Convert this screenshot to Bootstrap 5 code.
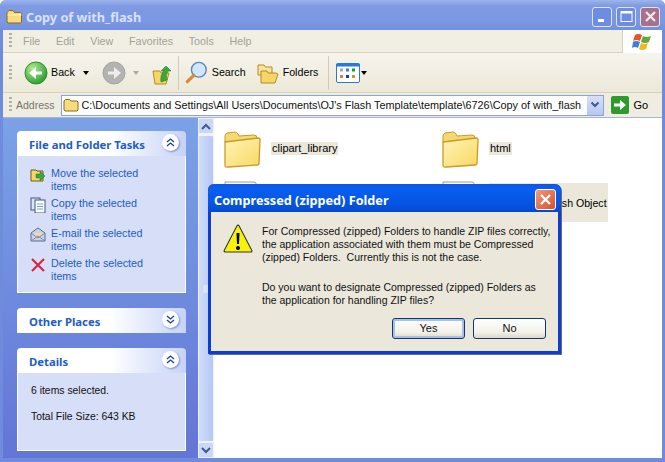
<!DOCTYPE html>
<html lang="en">
<head>
<meta charset="utf-8">
<title>Copy of with_flash</title>
<link href="https://cdn.jsdelivr.net/npm/bootstrap@5.3.0/dist/css/bootstrap.min.css" rel="stylesheet">
<style>
html,body{margin:0;height:462px;overflow:hidden;background:#fff}
body{font-family:"Liberation Sans",sans-serif;font-size:11px;line-height:13px;color:#000}
.xp-win{position:relative;width:665px;height:462px;display:flex;flex-direction:column;background:#6f8bdc;padding:0 3px 4px 3px;border-radius:6px 6px 0 0;overflow:hidden}
.xp-title{height:30px;margin:0 -3px;padding:3px 3px 0 6px;flex:none;background:linear-gradient(180deg,#9db5ee 0,#7f9ae2 6px,#7c97e3 22px,#7290de 30px);display:flex;align-items:center;gap:3px}
.xp-title-text{font:700 12.7px/16px "Noto Sans",sans-serif;color:#d8e1f7;flex:1}
.xp-cap{width:20px;height:20px;border-radius:3px;border:1px solid #dfe6f8;background:#6c8de3;display:flex;align-items:center;justify-content:center;margin-left:1px}
.xp-cap.xp-closer{background:#a9708c;margin-right:2px}
.xp-menu{height:23px;flex:none;background:#f1efe4;border-bottom:1px solid #d8d2bd;display:flex;align-items:center;color:#a3a196;padding-left:6px;font-size:10.7px}
.xp-grip{width:3px;height:16px;flex:none;background:repeating-linear-gradient(180deg,#b5b1a0 0 2px,transparent 2px 4px)}
.xp-menu .xp-grip{margin-right:11px}
.xp-menu span{margin-right:15.8px}
.xp-flag{margin-left:auto;width:40px;height:23px;background:#fff;display:flex;align-items:center;justify-content:center;border-left:1px solid #d8d2bd}
.xp-tools{height:40px;flex:none;background:linear-gradient(180deg,#f6f4ec,#ece9d9);border-bottom:1px solid #d8d2bd;display:flex;align-items:center;padding-left:6px;font-size:10.7px}
.xp-sep{width:1px;height:34px;background:#cfcbb8}
.xp-dd{width:0;height:0;border:3px solid transparent;border-top:4px solid #000;border-bottom:0}
.xp-dd.xp-dim{opacity:.3}
.xp-addr{height:25px;flex:none;background:#efede1;display:flex;align-items:center;padding:0 3px 0 6px;border-bottom:1px solid #a9b4d2}
.xp-addr-lbl{color:#77756a;margin-left:4px;font-size:10.5px}
.xp-addrbox{width:543px;height:21px;background:#fff;border:1px solid #8fa3d0;display:flex;align-items:center;padding-left:1px;margin-left:6px;overflow:hidden;white-space:nowrap;gap:3px;color:#111;flex:none;font-size:10.83px}
.xp-combo{margin-left:auto;width:16px;height:19px;flex:none;background:linear-gradient(180deg,#d6e0f8,#b6c8f2);display:flex;align-items:center;justify-content:center}
.xp-body{flex:1;display:flex;min-height:0}
.xp-side{width:195px;flex:none;background:linear-gradient(180deg,#7ba2e7,#6375d6);padding:13px 12px 0 14px;display:flex;flex-direction:column;font-size:10.75px}
.xp-box{margin-bottom:15px}
.xp-box-head{height:25px;border-radius:4px 4px 0 0;background:linear-gradient(90deg,#fff 55%,#c6d3f7);display:flex;align-items:center;justify-content:space-between;padding:2px 7px 0 12px;font:700 11.3px/14px "Noto Sans",sans-serif;color:#215dc6}
.xp-box-body{background:#d6dff7;border:1px solid #fff;border-top:0}
.xp-tasks{padding:11px 0 5px}
.xp-details{height:78px;padding:11px 0 0 13px;color:#111;font-size:10.4px}
.xp-details-gap{margin-top:13px}
.xp-chev{width:17px;height:17px;border-radius:50%;background:#fff;box-shadow:1px 1px 2px #7b8fc8;display:flex;align-items:center;justify-content:center;margin-top:-4px}
.xp-task{display:flex;gap:5px;height:30px;padding-left:12px;color:#215dc6}
.xp-task svg{flex:none}
.xp-scroll{width:16px;flex:none;background:#f1f4fd;display:flex;flex-direction:column}
.xp-sbtn{height:16px;flex:none;background:#c9d7f8;border:1px solid #eef2fd;border-radius:2px;display:flex;align-items:center;justify-content:center}
.xp-thumb{flex:1;margin:1px 0 0;background:linear-gradient(90deg,#d0dcfa,#b6c9f6);border:1px solid #eef2fd;border-radius:2px;display:flex;align-items:center;justify-content:center}
.xp-files{flex:1;background:#fff;padding:13px 0 0 10px;display:grid;grid-template-columns:218px 218px;grid-auto-rows:50px;overflow:hidden}
.xp-file{display:flex;gap:8px;align-items:flex-start}
.xp-file svg{flex:none}
.xp-file-label{background:#ebe8db;padding:0 1px;margin-top:11px;white-space:nowrap}
.xp-file-label.xp-multi{margin-top:2px;height:39px;padding-top:1px;font-size:10.6px}
.xp-dialog{position:absolute;left:208px;top:184px;width:353px;height:170px;background:#ebe8db;border:3px solid #0a3ed4;border-top:0;border-radius:6px 6px 0 0;box-shadow:1px 1px 0 #6a6a6a;display:flex;flex-direction:column}
.xp-dlg-title{height:28px;margin:0 -3px;flex:none;background:linear-gradient(180deg,#0a55e4 0,#0a5ff0 4px,#0554e2 20px,#0548d0 28px);border-radius:6px 6px 0 0;display:flex;align-items:center;justify-content:space-between;padding:3px 5px 0 6px;color:#fff;font:700 12.7px/16px "Noto Sans",sans-serif}
.xp-dlg-x{width:21px;height:21px;border-radius:3px;border:1px solid #fff;background:linear-gradient(135deg,#ee9a80,#d8502b);display:flex;align-items:center;justify-content:center}
.xp-dlg-main{display:flex;padding:13px 0 0 11px;gap:7px;flex:1}
.xp-dlg-main svg{flex:none;margin-top:-2px}
.xp-dlg-text{color:#111;width:300px;font-size:10.5px}
.xp-dlg-text p{margin:0 0 17px;white-space:nowrap}
.xp-dlg-text p:last-child{margin:0}
.xp-dlg-btns{display:flex;justify-content:flex-end;gap:8px;padding:0 12px 12px 0}
.xp-btn{width:73px;height:21px;padding:0;border:1px solid #0d3a76;border-radius:3px;background:linear-gradient(180deg,#fff,#f2f1e8 70%,#dcd8c8);font-size:11px;line-height:17px;color:#111}
.xp-btn.xp-dflt{box-shadow:inset 0 0 0 2px #a9c0e8}
.t-back{margin-left:12px}.t-backl{margin:0 8px 0 3px}.t-fwd{margin-left:13px}.t-dd2{margin:0 13px 0 7px}.t-sep1{margin:0 6px}.t-srch{margin:0 11px 0 3px}.t-fl{margin-left:2px}.t-sep2{margin:0 7px 0 10px}
.t-dd3{margin-left:1px}.t-go{margin-left:7px}.t-gol{margin-left:5px}
</style>
</head>
<body>
<div class="xp-win">
  <div class="xp-title">
    <svg width="17" height="15" viewBox="0 0 17 15"><path d="M1 3.500 3 1.500h4l1.500 2h6l1 1V13l-1 1H2l-1-1z" fill="#f7dc7e" stroke="#8c6a10"/><path d="M1.500 6h14" stroke="#fff6c8"/></svg>
    <div class="xp-title-text">Copy of with_flash</div>
    <div class="xp-cap"><svg width="12" height="12"><rect x="2" y="8" width="6" height="3" fill="#fff"/></svg></div>
    <div class="xp-cap"><svg width="13" height="13"><rect x="1" y="1.500" width="11" height="10" fill="none" stroke="#fff"/><rect x="1" y="1" width="11" height="2.500" fill="#fff"/></svg></div>
    <div class="xp-cap xp-closer"><svg width="13" height="13"><path d="M2 2l9 9M11 2l-9 9" stroke="#f3e6ea" stroke-width="2.400"/></svg></div>
  </div>
  <div class="xp-menu">
    <div class="xp-grip"></div>
    <span>File</span><span>Edit</span><span>View</span><span>Favorites</span><span>Tools</span><span>Help</span>
    <div class="xp-flag"><svg width="22" height="20" viewBox="0 0 22 20"><path d="M3 4q3-2 7 0l-2 6q-4-2-7 0z" fill="#e8542a"/><path d="M11 5q4 2 8 0l-2 6q-4 2-8 0z" fill="#62a83a"/><path d="M1 11q3-2 7 0l-2 6q-3-2-6 0z" fill="#3d7ed8"/><path d="M9 12q4 2 7 0l-2 6q-4 2-7 0z" fill="#f0b818"/></svg></div>
  </div>
  <div class="xp-tools">
    <div class="xp-grip"></div>
    <svg class="t-back" width="24" height="24" viewBox="0 0 24 24"><defs><radialGradient id="gb" cx=".35" cy=".3" r=".8"><stop offset="0" stop-color="#b2ea92"/><stop offset="1" stop-color="#1c9a26"/></radialGradient></defs><circle cx="12" cy="12" r="11" fill="url(#gb)" stroke="#2f8a30"/><path d="M18 10.500h-6V6l-7 6 7 6v-4.500h6z" fill="#fff"/></svg>
    <span class="t-backl">Back</span><div class="xp-dd"></div>
    <svg class="t-fwd" width="24" height="24" viewBox="0 0 24 24"><circle cx="12" cy="12" r="11" fill="#b3b3af" stroke="#a5a5a1"/><path d="M6 10.500h6V6l7 6-7 6v-4.500H6z" fill="#eee"/></svg>
    <div class="xp-dd xp-dim t-dd2"></div>
    <svg width="20" height="24" viewBox="0 0 20 24"><path d="M1 10h7l1 2h8l-3 11H3z" fill="#f6d66a" stroke="#b48c20"/><path d="M9 21q-1-7 3-11H9l5-5 5 5h-3q-3 4-1 9z" fill="#3ca63a" stroke="#1e7a28" stroke-width=".6"/></svg>
    <div class="xp-sep t-sep1"></div>
    <svg width="24" height="25" viewBox="0 0 26 26"><circle cx="15" cy="10" r="8" fill="#cfe6fb" stroke="#5d86b8" stroke-width="1.500"/><path d="M9.500 16 2.500 23" stroke="#d88a3a" stroke-width="3.500" stroke-linecap="round"/></svg>
    <span class="t-srch">Search</span>
    <svg width="24" height="22" viewBox="0 0 24 22"><path d="M1 3h6l1.500 2H15v8H1z" fill="#f9e39a" stroke="#b48c20"/><path d="M4 9h6l1 2h8l2 1-3 9H4z" fill="#f6d66a" stroke="#b48c20"/></svg>
    <span class="t-fl">Folders</span>
    <div class="xp-sep t-sep2"></div>
    <svg width="24" height="20" viewBox="0 0 24 20"><rect x=".5" y=".5" width="23" height="19" rx="1.500" fill="#fff" stroke="#2b78d8" stroke-width="1"/><rect x=".5" y=".5" width="23" height="3" fill="#2b78d8"/><g><rect x="4" y="5.500" width="3" height="3" fill="#a79fdc"/><rect x="10" y="5.500" width="3" height="3" fill="#3d7ed8"/><rect x="16" y="5.500" width="3" height="3" fill="#1a9a3a"/><rect x="4" y="12" width="3" height="3" fill="#f0784a"/><rect x="10" y="12" width="3" height="3" fill="#12409c"/><rect x="16" y="12" width="3" height="3" fill="#c89a18"/></g></svg>
    <div class="xp-dd t-dd3"></div>
  </div>
  <div class="xp-addr">
    <div class="xp-grip"></div>
    <span class="xp-addr-lbl">Address</span>
    <div class="xp-addrbox">
      <svg width="16" height="14" viewBox="0 0 16 14"><path d="M1 3l1.500-1.500h4L8 3h6l1 1v8l-1 1H2l-1-1z" fill="#f7dc7e" stroke="#8c6a10"/></svg>
      <span>C:\Documents and Settings\All Users\Documents\OJ's Flash Template\template\6726\Copy of with_flash</span>
      <div class="xp-combo"><svg width="10" height="8"><path d="M1.500 1.500 5 5l3.500-3.500" fill="none" stroke="#3d5a90" stroke-width="2"/></svg></div>
    </div>
    <svg class="t-go" width="18" height="18" viewBox="0 0 18 18"><rect width="18" height="18" rx="2" fill="#2f9a2c"/><path d="M3 7.500h6V4l6 5-6 5v-3.500H3z" fill="#fff"/></svg>
    <span class="t-gol">Go</span>
  </div>
  <div class="xp-body">
    <div class="xp-side">
      <div class="xp-box">
        <div class="xp-box-head"><span>File and Folder Tasks</span><span class="xp-chev"><svg width="9" height="9"><path d="M1 4l3.500-3L8 4M1 8l3.500-3L8 8" fill="none" stroke="#1c3fa0" stroke-width="1.300"/></svg></span></div>
        <div class="xp-box-body xp-tasks">
          <div class="xp-task"><svg width="16" height="16" viewBox="0 0 16 16"><path d="M1 3h5l1 1h6v10H1z" fill="#f6d66a" stroke="#6a5a20"/><path d="M6 7h4V4l5 5-5 5v-3H6z" fill="#3ca63a" stroke="#1e7a28" stroke-width=".5"/></svg><span>Move the selected<br>items</span></div>
          <div class="xp-task"><svg width="16" height="16" viewBox="0 0 16 16"><rect x="1" y="1" width="9" height="12" fill="#d8e6f6" stroke="#44557c"/><rect x="5" y="3" width="10" height="13" fill="#fff" stroke="#44557c"/><path d="M7 7h6M7 9.500h6M7 12h6" stroke="#6ba4de"/></svg><span>Copy the selected<br>items</span></div>
          <div class="xp-task"><svg width="16" height="16" viewBox="0 0 16 16"><path d="M1 6 8 1l7 5v8H1z" fill="#c6d4ea" stroke="#5a6a8c"/><path d="M4 6h8v4H4z" fill="#f6d9a0"/><path d="M1 14l7-5 7 5M1 6l7 5 7-5" fill="none" stroke="#7d8db0"/></svg><span>E-mail the selected<br>items</span></div>
          <div class="xp-task"><svg width="16" height="16" viewBox="0 0 16 16"><path d="M2 2l12 12M14 2 2 14" stroke="#d8263e" stroke-width="2.200"/></svg><span>Delete the selected<br>items</span></div>
        </div>
      </div>
      <div class="xp-box">
        <div class="xp-box-head"><span>Other Places</span><span class="xp-chev"><svg width="9" height="9"><path d="M1 1l3.500 3L8 1M1 5l3.500 3L8 5" fill="none" stroke="#1c3fa0" stroke-width="1.300"/></svg></span></div>
      </div>
      <div class="xp-box">
        <div class="xp-box-head"><span>Details</span><span class="xp-chev"><svg width="9" height="9"><path d="M1 4l3.500-3L8 4M1 8l3.500-3L8 8" fill="none" stroke="#1c3fa0" stroke-width="1.300"/></svg></span></div>
        <div class="xp-box-body xp-details">
          <div>6 items selected.</div>
          <div class="xp-details-gap">Total File Size: 643 KB</div>
        </div>
      </div>
    </div>
    <div class="xp-scroll">
      <div class="xp-sbtn"><svg width="10" height="7"><path d="M1 6l4-4 4 4" fill="none" stroke="#3d5a90" stroke-width="2"/></svg></div>
      <div class="xp-thumb"><svg width="7" height="8"><path d="M0 1h7M0 3h7M0 5h7M0 7h7" stroke="#eef2fd"/></svg></div>
      <div class="xp-sbtn"><svg width="10" height="7"><path d="M1 1l4 4 4-4" fill="none" stroke="#3d5a90" stroke-width="2"/></svg></div>
    </div>
    <div class="xp-files">
      <div class="xp-file"><svg width="39" height="40" viewBox="0 0 39 40"><defs><linearGradient id="fg" x1="0" y1="0" x2="1" y2="1"><stop offset="0" stop-color="#fff3b8"/><stop offset="1" stop-color="#f9d964"/></linearGradient></defs><path d="M1 5q0-2 2-3l8-1q2 0 3 2l1 2 15-1q3 0 3 3v4H1z" fill="#f5d873" stroke="#c89c28"/><path d="M1 11l33-4q2 0 2 2l-1 23q0 2-2 2L4 36q-3 .5-3-2z" fill="url(#fg)" stroke="#c89c28" stroke-width="1.300"/></svg><span class="xp-file-label">clipart_library</span></div>
      <div class="xp-file"><svg width="39" height="40" viewBox="0 0 39 40"><path d="M1 5q0-2 2-3l8-1q2 0 3 2l1 2 15-1q3 0 3 3v4H1z" fill="#f5d873" stroke="#c89c28"/><path d="M1 11l33-4q2 0 2 2l-1 23q0 2-2 2L4 36q-3 .5-3-2z" fill="url(#fg)" stroke="#c89c28" stroke-width="1.300"/></svg><span class="xp-file-label">html</span></div>
      <div class="xp-file"><svg width="39" height="40" viewBox="0 0 39 40"><path d="M1 1h30l2 3v36H1z" fill="#fff" stroke="#999"/></svg></div>
      <div class="xp-file"><svg width="39" height="40" viewBox="0 0 39 40"><path d="M1 1h30l2 3v36H1z" fill="#fff" stroke="#999"/></svg><span class="xp-file-label xp-multi"><br>Shockwave Flash Object</span></div>
    </div>
  </div>
  <div class="xp-dialog">
    <div class="xp-dlg-title"><span>Compressed (zipped) Folder</span><span class="xp-dlg-x"><svg width="13" height="13"><path d="M2 2l9 9M11 2l-9 9" stroke="#fff" stroke-width="2.400"/></svg></span></div>
    <div class="xp-dlg-main">
      <svg width="33" height="33" viewBox="0 0 33 33"><path d="M16 3 3 28h26z" fill="#f7f20a" stroke="#333" stroke-width="3" stroke-linejoin="round"/><path d="M16 3 3 28h26z" fill="#f7f20a" stroke="#f7f20a" stroke-width="1" stroke-linejoin="round"/><path d="M14.500 10h3l-.5 11h-2z" fill="#000"/><circle cx="16" cy="25" r="2" fill="#000"/></svg>
      <div class="xp-dlg-text">
        <p>For Compressed (zipped) Folders to handle ZIP files correctly,<br>the application associated with them must be Compressed<br>(zipped) Folders.&nbsp; Currently this is not the case.</p>
        <p>Do you want to designate Compressed (zipped) Folders as<br>the application for handling ZIP files?</p>
      </div>
    </div>
    <div class="xp-dlg-btns"><button class="xp-btn xp-dflt" type="button">Yes</button><button class="xp-btn" type="button">No</button></div>
  </div>
</div>
<script src="https://cdn.jsdelivr.net/npm/bootstrap@5.3.0/dist/js/bootstrap.bundle.min.js"></script>
</body>
</html>
